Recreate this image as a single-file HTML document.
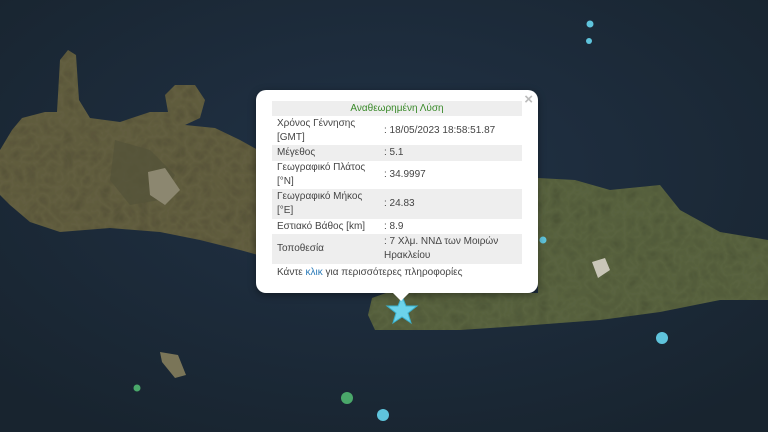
<!DOCTYPE html>
<html><head><meta charset="utf-8"><style>
body{margin:0;width:768px;height:432px;overflow:hidden;background:#1c2938;font-family:"Liberation Sans",sans-serif}
#map{position:absolute;left:0;top:0}
.pop{position:absolute;left:256px;top:90px;width:282px;height:203px;background:#fff;border-radius:10px;box-shadow:0 2px 8px rgba(0,0,0,.4)}
.x{position:absolute;right:5px;top:1px;color:#bbb;font-size:15px;font-weight:bold}
table{position:absolute;left:16px;top:11px;width:250px;border-collapse:collapse;font-size:10px;color:#444;line-height:14px}
td{padding:0 5px;vertical-align:middle}
td:first-child{width:97px}
tr.g{background:#eeeeee}
.h td{color:#3a8a2a;text-align:center;height:15px}
.foot{position:absolute;left:21px;top:177px;font-size:10px;color:#444}
.foot span{color:#2a7ab8}
</style></head><body>
<svg id="map" width="768" height="432">
<defs><radialGradient id="s" cx="50%" cy="40%" r="70%"><stop offset="0" stop-color="#213246"/><stop offset="1" stop-color="#18242f"/></radialGradient>
<filter id="t"><feTurbulence baseFrequency="0.08" numOctaves="2" seed="3"/><feColorMatrix values="0 0 0 0 0  0 0 0 0 0  0 0 0 0 0  0 0 0 0.35 0"/><feComposite in2="SourceGraphic" operator="in"/><feBlend in2="SourceGraphic" mode="multiply"/></filter></defs>
<rect width="768" height="432" fill="url(#s)"/>
<g filter="url(#t)">
<path d="M0,150 L12,130 L22,118 L45,112 L57,112 L60,60 L68,50 L76,55 L79,100 L90,118 L120,122 L150,112 L168,112 L165,95 L175,85 L195,85 L205,100 L200,118 L185,125 L215,128 L240,140 L258,150 L258,255 L240,250 L200,240 L160,232 L110,228 L60,232 L30,222 L10,205 L0,195 Z" fill="#635f40"/>
<path d="M538,178 L575,180 L610,190 L660,185 L680,210 L720,232 L768,240 L768,300 L720,300 L660,312 L600,320 L520,326 L460,330 L375,330 L368,315 L372,298 L386,293 L538,293 Z" fill="#5a6440"/>
</g>
<path d="M115,140 L150,150 L175,175 L160,200 L130,205 L110,180 Z" fill="#55543a" opacity=".8"/>
<path d="M148,172 L165,168 L180,190 L165,205 L150,195Z" fill="#8c8770"/>
<path d="M592,262 L605,258 L610,270 L598,278Z" fill="#c9c6b8"/>
<path d="M160,352 L178,355 L186,375 L175,378 L162,362Z" fill="#7a7558"/>
<circle cx="590" cy="24" r="3.5" fill="#5fc4dc"/><circle cx="589" cy="41" r="3" fill="#5fc4dc"/>
<circle cx="543" cy="240" r="3.5" fill="#5fc4dc"/><circle cx="662" cy="338" r="6" fill="#5fc4dc"/>
<circle cx="383" cy="415" r="6" fill="#5fc4dc"/><circle cx="347" cy="398" r="6" fill="#4aa86a"/>
<circle cx="137" cy="388" r="3.5" fill="#4aa86a"/>
<polygon points="402,296 406,306 417,306 408,313 411,323 402,317 393,323 396,313 387,306 398,306" fill="#6cd3ea" stroke="#3ab0cc" stroke-width="1"/>
</svg>
<div class="pop"><div class="x">×</div>
<table>
<tr class="h g"><td colspan="2">Αναθεωρημένη Λύση</td></tr>
<tr><td style="height:29px">Χρόνος Γέννησης [GMT]</td><td>: 18/05/2023 18:58:51.87</td></tr>
<tr class="g"><td style="height:16px">Μέγεθος</td><td>: 5.1</td></tr>
<tr><td style="height:28px">Γεωγραφικό Πλάτος [°N]</td><td>: 34.9997</td></tr>
<tr class="g"><td style="height:30px">Γεωγραφικό Μήκος [°E]</td><td>: 24.83</td></tr>
<tr><td style="height:15px">Εστιακό Βάθος [km]</td><td>: 8.9</td></tr>
<tr class="g"><td style="height:30px">Τοποθεσία</td><td>: 7 Χλμ. ΝΝΔ των Μοιρών Ηρακλείου</td></tr>
</table>
<div class="foot">Κάντε <span>κλικ</span> για περισσότερες πληροφορίες</div>
</div>
<div style="position:absolute;left:392px;top:292px;width:0;height:0;border-left:9px solid transparent;border-right:9px solid transparent;border-top:9px solid #fff"></div>
</body></html>
